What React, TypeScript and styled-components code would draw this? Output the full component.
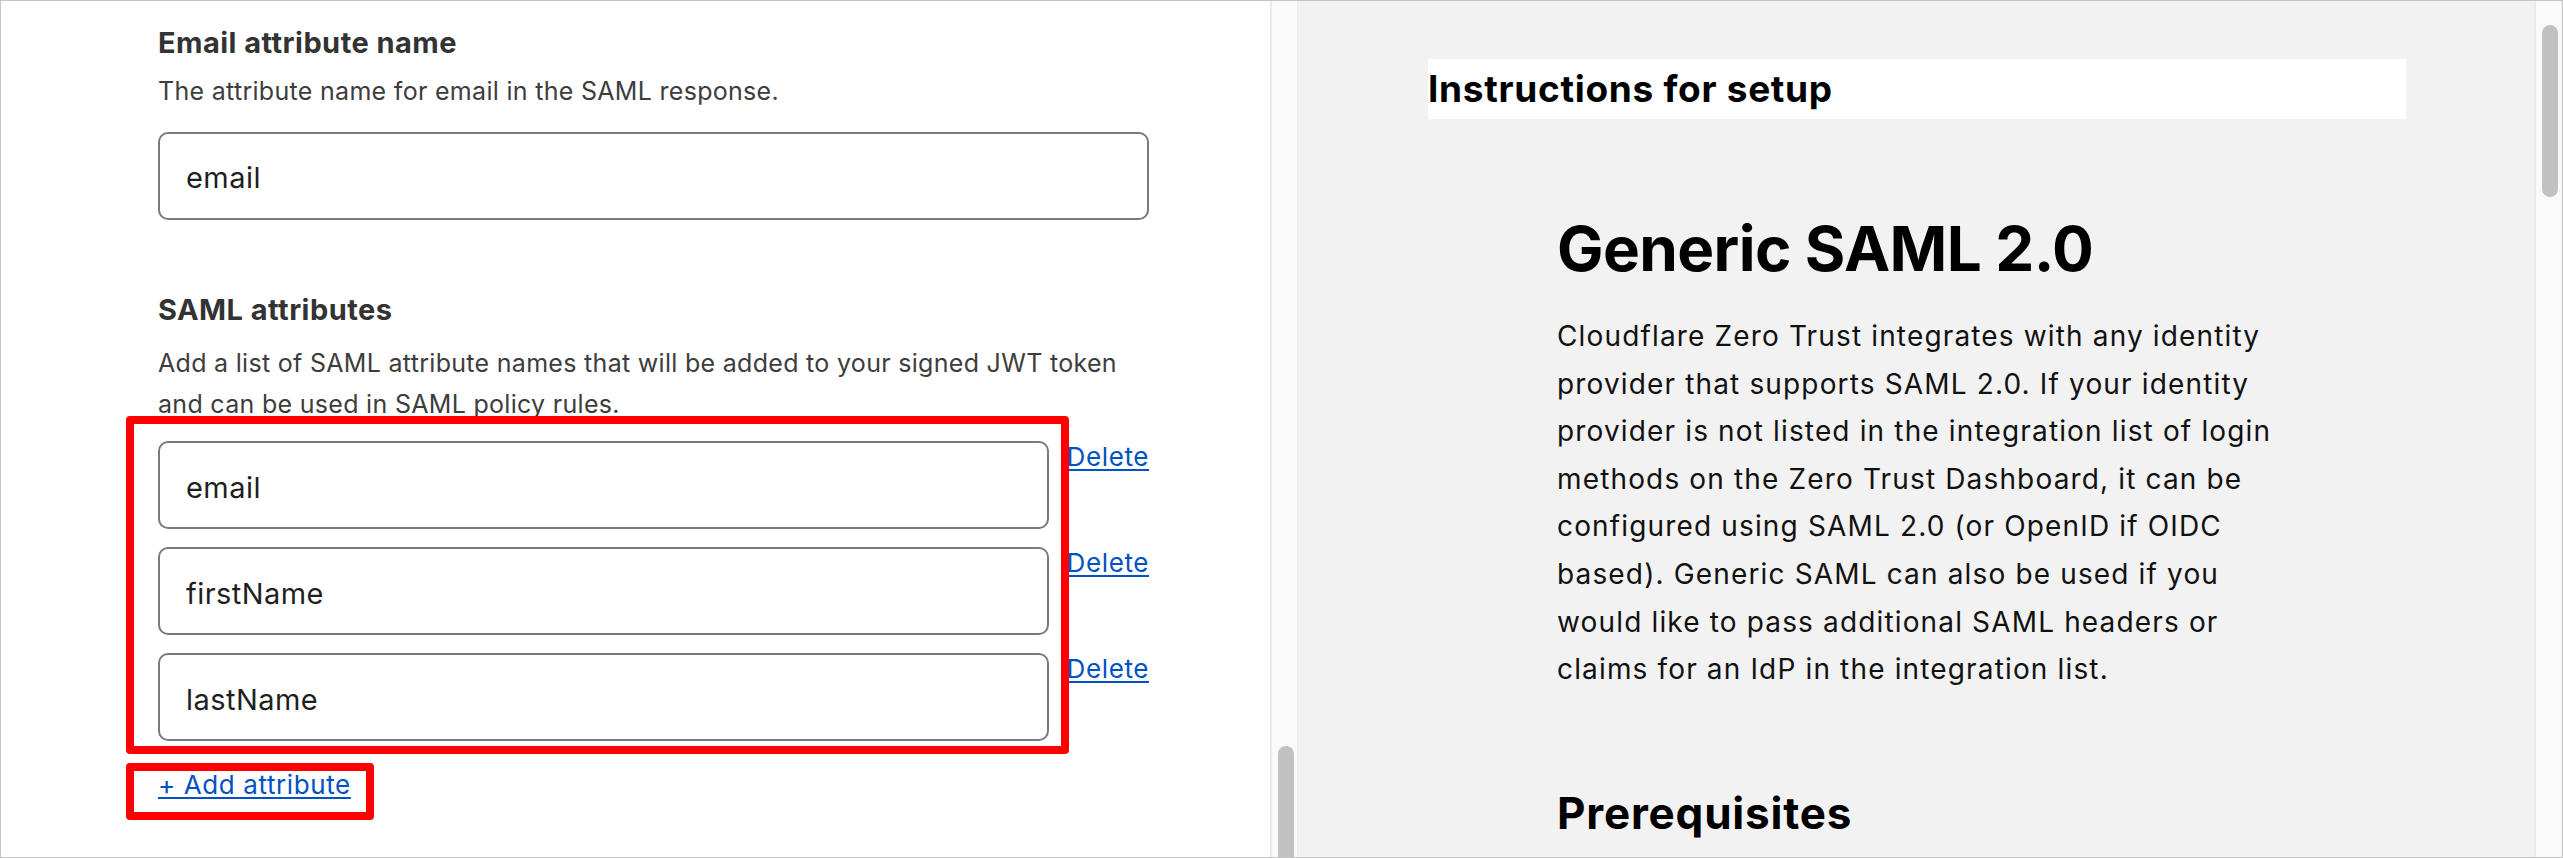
import React from 'react';
import styled, { createGlobalStyle } from 'styled-components';

const GlobalStyle = createGlobalStyle`
  html, body {
    margin: 0;
    padding: 0;
    background: #ffffff;
    overflow: hidden;
  }
  * {
    box-sizing: border-box;
  }
`;

const Frame = styled.div`
  display: flex;
  width: 2563px;
  height: 858px;
  border: 1px solid #c4c4c4;
  font-family: Inter, 'Noto Sans', 'Liberation Sans', sans-serif;
  overflow: hidden;
`;

const FormPane = styled.div`
  width: 1269px;
  flex-shrink: 0;
  background: #ffffff;
  padding: 25px 0 0 157px;
  overflow: hidden;
`;

const FieldTitle = styled.h3<{ $gap?: number }>`
  margin: ${p => p.$gap || 0}px 0 0;
  font-size: 29px;
  line-height: 34px;
  font-weight: 700;
  letter-spacing: 0.45px;
  color: #333333;
`;

const FieldHint = styled.p<{ $gap?: number }>`
  width: 991px;
  margin: ${p => p.$gap ?? 11}px 0 0;
  font-size: 25px;
  line-height: 40.8px;
  letter-spacing: 0.3px;
  color: #3d3d3d;
`;

const TextBox = styled.input<{ $width?: number }>`
  display: block;
  width: ${p => (p.$width ? `${p.$width}px` : '100%')};
  height: 88px;
  margin: 0;
  padding: 4px 26px 0;
  border: 2px solid #7a7a7a;
  border-radius: 10px;
  background: #ffffff;
  font-family: inherit;
  font-size: 29px;
  letter-spacing: 0.45px;
  color: #1f1f1f;
  outline: none;
`;

const SingleField = styled.div`
  width: 991px;
  margin-top: 20px;
`;

const AttributeList = styled.div`
  position: relative;
  display: flex;
  flex-direction: column;
  gap: 18px;
  width: 991px;
  margin-top: 17px;
`;

const AttributeRow = styled.div`
  display: flex;
  align-items: flex-start;
  gap: 18px;
`;

const LinkButton = styled.a`
  font-size: 26px;
  line-height: 31px;
  letter-spacing: 0.6px;
  color: #0051c3;
  text-decoration: underline;
  text-underline-offset: 3px;
  text-decoration-thickness: 2px;
  cursor: pointer;
  white-space: nowrap;
`;

const AddWrap = styled.div`
  position: relative;
  margin-top: 28px;
  width: 991px;
`;

// red annotation rectangles drawn over the form
const Callout = styled.div<{ $left: number; $top: number; $w: number; $h: number }>`
  position: absolute;
  left: ${p => p.$left}px;
  top: ${p => p.$top}px;
  width: ${p => p.$w}px;
  height: ${p => p.$h}px;
  border: 8px solid #ff0000;
  border-radius: 4px;
  pointer-events: none;
`;

const ScrollTrack = styled.div`
  width: 28px;
  flex-shrink: 0;
  display: flex;
  flex-direction: column;
  background: #fafafa;
  border-left: 2px solid #ebebeb;
  border-right: 1px solid #ededed;
  padding-left: 6px;
`;

const ScrollThumb = styled.div<{ $top: number; $h: number }>`
  width: 16px;
  height: ${p => p.$h}px;
  margin-top: ${p => p.$top}px;
  border-radius: 8px;
  background: #c1c1c1;
  flex-shrink: 0;
`;

const DocPane = styled.div`
  flex: 1;
  background: #f2f2f2;
  padding: 58px 0 0 130px;
  overflow: hidden;
  color: #000000;
`;

const SetupBar = styled.div`
  width: 978px;
  height: 60px;
  background: #ffffff;
  font-size: 37px;
  line-height: 60px;
  font-weight: 700;
  letter-spacing: 0.7px;
`;

const DocBody = styled.div`
  padding-left: 129px;
  width: 900px;
`;

const DocTitle = styled.h1`
  margin: 93px 0 0;
  font-size: 62px;
  line-height: 74px;
  font-weight: 700;
  letter-spacing: -0.6px;
`;

const DocText = styled.p`
  margin: 27px 0 0;
  width: 760px;
  font-size: 28px;
  line-height: 47.6px;
  letter-spacing: 1.15px;
  color: #111111;
`;

const DocSection = styled.h2`
  margin: 93px 0 0;
  font-size: 44px;
  line-height: 52px;
  font-weight: 700;
  letter-spacing: 0.8px;
`;

const attributes = ['email', 'firstName', 'lastName'];

const introLines = [
  'Cloudflare Zero Trust integrates with any identity',
  'provider that supports SAML 2.0. If your identity',
  'provider is not listed in the integration list of login',
  'methods on the Zero Trust Dashboard, it can be',
  'configured using SAML 2.0 (or OpenID if OIDC',
  'based). Generic SAML can also be used if you',
  'would like to pass additional SAML headers or',
  'claims for an IdP in the integration list.',
];

export default function App() {
  return (
    <>
      <GlobalStyle />
      <Frame>
        <FormPane>
          <FieldTitle>Email attribute name</FieldTitle>
          <FieldHint>The attribute name for email in the SAML response.</FieldHint>
          <SingleField>
            <TextBox defaultValue="email" />
          </SingleField>

          <FieldTitle $gap={73}>SAML attributes</FieldTitle>
          <FieldHint $gap={16}>
            Add a list of SAML attribute names that will be added to your signed JWT token and can be used in SAML policy rules.
          </FieldHint>

          <AttributeList>
            {attributes.map(name => (
              <AttributeRow key={name}>
                <TextBox defaultValue={name} $width={891} />
                <LinkButton>Delete</LinkButton>
              </AttributeRow>
            ))}
            <Callout $left={-32} $top={-25} $w={943} $h={338} />
          </AttributeList>

          <AddWrap>
            <LinkButton>+ Add attribute</LinkButton>
            <Callout $left={-32} $top={-6} $w={248} $h={57} />
          </AddWrap>
        </FormPane>

        <ScrollTrack>
          <ScrollThumb $top={745} $h={200} />
        </ScrollTrack>

        <DocPane>
          <SetupBar>Instructions for setup</SetupBar>
          <DocBody>
            <DocTitle>Generic SAML 2.0</DocTitle>
            <DocText>
              {introLines.map((line, i) => (
                <React.Fragment key={i}>
                  {line}
                  {i < introLines.length - 1 && <br />}
                </React.Fragment>
              ))}
            </DocText>
            <DocSection>Prerequisites</DocSection>
          </DocBody>
        </DocPane>

        <ScrollTrack>
          <ScrollThumb $top={24} $h={172} />
        </ScrollTrack>
      </Frame>
    </>
  );
}
